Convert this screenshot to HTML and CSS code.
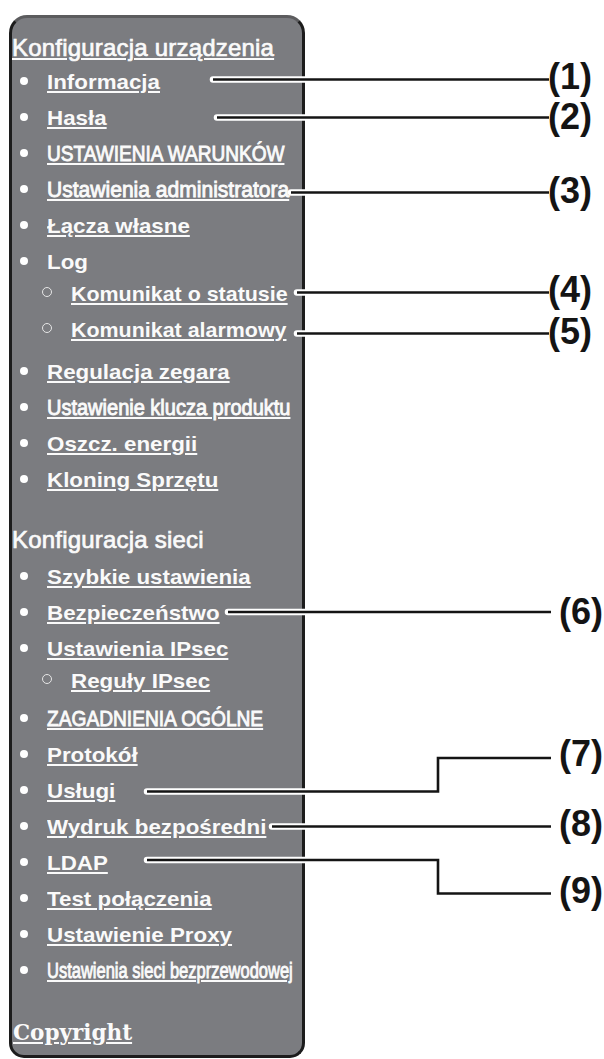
FILE: index.html
```html
<!DOCTYPE html>
<html lang="pl">
<head>
<meta charset="utf-8">
<title>Menu</title>
<link rel="stylesheet" href="styles.css">
</head>
<body>
<nav class="panel">
  <a class="head" href="#">Konfiguracja urządzenia</a>
  <ul class="menu">
    <li><a class="lbl" href="#">Informacja</a></li>
    <li><a class="lbl" href="#">Hasła</a></li>
    <li><a class="lbl nar nx-ust" href="#">USTAWIENIA WARUNKÓW</a></li>
    <li><a class="lbl nar nx-adm" href="#">Ustawienia administratora</a></li>
    <li><a class="lbl" href="#">Łącza własne</a></li>
    <li><span class="lbl">Log</span>
      <ul class="sub">
        <li><a class="lbl sq" href="#">Komunikat o statusie</a></li>
        <li><a class="lbl sq" href="#">Komunikat alarmowy</a></li>
      </ul>
    </li>
    <li><a class="lbl" href="#">Regulacja zegara</a></li>
    <li><a class="lbl nar nx-key" href="#">Ustawienie klucza produktu</a></li>
    <li><a class="lbl" href="#">Oszcz. energii</a></li>
    <li><a class="lbl" href="#">Kloning Sprzętu</a></li>
  </ul>

  <div class="head head-plain second">Konfiguracja sieci</div>
  <ul class="menu menu-net">
    <li><a class="lbl" href="#">Szybkie ustawienia</a></li>
    <li><a class="lbl" href="#">Bezpieczeństwo</a></li>
    <li><a class="lbl" href="#">Ustawienia IPsec</a>
      <ul class="sub sub-tight">
        <li><a class="lbl" href="#">Reguły IPsec</a></li>
      </ul>
    </li>
    <li><a class="lbl nar nx-zag" href="#">ZAGADNIENIA OGÓLNE</a></li>
    <li><a class="lbl" href="#">Protokół</a></li>
    <li><a class="lbl" href="#">Usługi</a></li>
    <li><a class="lbl" href="#">Wydruk bezpośredni</a></li>
    <li><a class="lbl" href="#">LDAP</a></li>
    <li><a class="lbl" href="#">Test połączenia</a></li>
    <li><a class="lbl" href="#">Ustawienie Proxy</a></li>
    <li><a class="lbl nar nx-wifi" href="#">Ustawienia sieci bezprzewodowej</a></li>
  </ul>

  <a class="copyright" href="#">Copyright</a>
</nav>

<svg class="callouts" width="604" height="1059" viewBox="0 0 604 1059" aria-hidden="true">
  <defs>
    <path id="c1" d="M213 79.5H549"/>
    <path id="c2" d="M217 117.5H549"/>
    <path id="c3" d="M291 192.5H549"/>
    <path id="c4" d="M297 292.5H549"/>
    <path id="c5" d="M297 333.5H549"/>
    <path id="c6" d="M228 612H551"/>
    <path id="c7" d="M147 791.5H438V758H551"/>
    <path id="c8" d="M272 826.5H551"/>
    <path id="c9" d="M147 860H438V893.5H551"/>
  </defs>
  <g class="halo">
    <use href="#c1"/><use href="#c2"/><use href="#c3"/><use href="#c4"/><use href="#c5"/>
    <use href="#c6"/><use href="#c7"/><use href="#c8"/><use href="#c9"/>
  </g>
  <g class="ink">
    <use href="#c1"/><use href="#c2"/><use href="#c3"/><use href="#c4"/><use href="#c5"/>
    <use href="#c6"/><use href="#c7"/><use href="#c8"/><use href="#c9"/>
  </g>
  <g class="tags">
    <text x="548" y="89">(1)</text>
    <text x="548" y="128.5">(2)</text>
    <text x="548" y="202.5">(3)</text>
    <text x="548" y="302">(4)</text>
    <text x="548" y="343.5">(5)</text>
    <text x="559" y="623.5">(6)</text>
    <text x="559" y="765.5">(7)</text>
    <text x="559" y="836">(8)</text>
    <text x="559" y="903">(9)</text>
  </g>
</svg>
</body>
</html>
```

FILE: styles.css
```css
* { box-sizing: border-box; }

html, body {
  margin: 0;
  padding: 0;
  background: #ffffff;
}

body {
  position: relative;
  width: 604px;
  height: 1059px;
  overflow: hidden;
  font-family: "Liberation Sans", Arial, sans-serif;
}

.panel {
  margin: 15px 0 0 9px;
  width: 296px;
  height: 1043px;
  padding-top: 16px;
  background: #7b7c80;
  border: 3px solid #1c1c1c;
  border-top-color: #5c5c5e;
  border-radius: 18px 18px 15px 15px;
  color: #fafafa;
}

.panel a {
  color: inherit;
  text-decoration: underline;
  text-decoration-thickness: 2px;
  text-underline-offset: 2px;
}

.head {
  display: block;
  font-size: 24px;
  line-height: 28px;
  font-weight: normal;
  letter-spacing: 0.2px;
  white-space: nowrap;
  -webkit-text-stroke: 0.7px #fafafa;
}

.head-plain { text-decoration: none; }

.second { margin-top: 28px; }

.menu {
  list-style: none;
  margin: 2px 0 0;
  padding: 0;
}

.menu-net { margin-top: 5px; }

.menu li {
  line-height: 36px;
  font-size: 20.5px;
  font-weight: bold;
  white-space: nowrap;
}

.menu li::before {
  content: "";
  display: inline-block;
  width: 8px;
  height: 8px;
  margin: 0 19px 0 8px;
  border-radius: 50%;
  background: #ffffff;
  vertical-align: 4.5px;
}

.sub {
  list-style: none;
  margin: -4px 0 6px;
  padding: 0;
}

.sub-tight { margin-bottom: 2px; }

.menu .sub li::before {
  width: 8px;
  height: 8px;
  margin: 0 19px 0 30px;
  background: transparent;
  border: 1px solid #e6e6e6;
  vertical-align: 4.5px;
}

.lbl {
  display: inline-block;
  line-height: 24px;
  transform-origin: 0 50%;
  transform: scaleX(1.09);
}

.sq { transform: scaleX(1.045); }

.nar {
  font-size: 22px;
  font-weight: normal;
  -webkit-text-stroke: 0.9px #fafafa;
}

.nx-ust { transform: scaleX(0.866); }
.nx-adm { transform: scaleX(0.957); }
.nx-key { transform: scaleX(0.909); }
.nx-zag { transform: scaleX(0.871); }
.nx-wifi { transform: scaleX(0.75); }

.copyright {
  display: inline-block;
  margin-top: 30px;
  padding-left: 1px;
  font-family: "DejaVu Serif", "Liberation Serif", serif;
  font-weight: bold;
  font-size: 21.5px;
  line-height: 28px;
}

.callouts {
  position: absolute;
  left: 0;
  top: 0;
  pointer-events: none;
}

.halo use {
  fill: none;
  stroke: #ffffff;
  stroke-width: 6.5;
  stroke-linecap: round;
  stroke-linejoin: miter;
}

.ink use {
  fill: none;
  stroke: #141414;
  stroke-width: 2.6;
  stroke-linecap: butt;
  stroke-linejoin: miter;
}

.tags text {
  font-family: "Liberation Sans", Arial, sans-serif;
  font-weight: bold;
  font-size: 36px;
  fill: #141414;
}
```
